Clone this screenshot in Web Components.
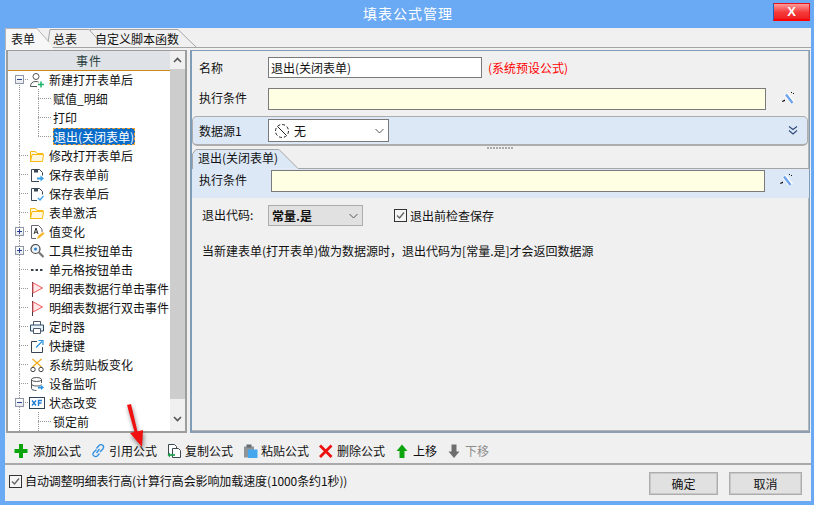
<!DOCTYPE html>
<html lang="zh">
<head>
<meta charset="utf-8">
<title>填表公式管理</title>
<style>
html,body{margin:0;padding:0;}
body{font:12px/1 "Noto Sans CJK SC","Liberation Sans",sans-serif;color:#111;}
</style>
</head>
<body>

<app-window>
  <title-bar slot="title">填表公式管理</title-bar>
  <tab-strip slot="tabs"></tab-strip>

  <tree-panel slot="tree">
    <tree-row icon="user-add" toggle="minus" first>新建打开表单后</tree-row>
    <tree-row child>赋值_明细</tree-row>
    <tree-row child>打印</tree-row>
    <tree-row child last selected>退出(关闭表单)</tree-row>
    <tree-row icon="folder">修改打开表单后</tree-row>
    <tree-row icon="save-in">保存表单前</tree-row>
    <tree-row icon="save-ok">保存表单后</tree-row>
    <tree-row icon="folder">表单激活</tree-row>
    <tree-row icon="doc-edit" toggle="plus">值变化</tree-row>
    <tree-row icon="search" toggle="plus">工具栏按钮单击</tree-row>
    <tree-row icon="dots">单元格按钮单击</tree-row>
    <tree-row icon="flag">明细表数据行单击事件</tree-row>
    <tree-row icon="flag">明细表数据行双击事件</tree-row>
    <tree-row icon="printer">定时器</tree-row>
    <tree-row icon="share">快捷键</tree-row>
    <tree-row icon="scissors">系统剪贴板变化</tree-row>
    <tree-row icon="database">设备监听</tree-row>
    <tree-row icon="xf" toggle="minus">状态改变</tree-row>
    <tree-row child>锁定前</tree-row>
  </tree-panel>

  <form-panel slot="form"></form-panel>

  <action-bar slot="actions">
    <action-item icon="plus">添加公式</action-item>
    <action-item icon="link">引用公式</action-item>
    <action-item icon="copy">复制公式</action-item>
    <action-item icon="paste">粘贴公式</action-item>
    <action-item icon="cross">删除公式</action-item>
    <action-item icon="up">上移</action-item>
    <action-item icon="down" disabled>下移</action-item>
  </action-bar>

  <check-box slot="option" style="letter-spacing:-.1px">自动调整明细表行高(计算行高会影响加载速度(1000条约1秒))</check-box>
  <push-button slot="ok" style="width:69px">确定</push-button>
  <push-button slot="cancel" style="width:73px">取消</push-button>
</app-window>

<script>
/* icons, all on a 16 box */
const ICONS = {
  'user-add': '<circle cx="7" cy="4.500" r="3" fill="#fff" stroke="#555"/><path d="M1.500 14.500c0-3.500 2-5 5.500-5 1 0 2 .2 2.700.6M1.500 14.500H8" fill="none" stroke="#555"/><path d="M12 9.500v6M9 12.500h6" stroke="#1cb36b" stroke-width="1.500"/>',
  'folder': '<path d="M1.500 13.500V3.500h5l1.500 2h6v1" fill="#fff8df" stroke="#f9b90f"/><path d="M1.500 13.500l1.500-7h11.500l-1 7z" fill="#fff8df" stroke="#f9b90f"/>',
  'save-in': '<path d="M2.500 14.500H10M2.500 14.500v-12h8l3 3v3" fill="none" stroke="#3b4654"/><path d="M5 2.500h4v3H5z" fill="#3b4654"/><path d="M8 11.500h4" stroke="#39a0e8" stroke-width="2"/><path d="M11.500 8.500l3.500 3-3.500 3z" fill="#39a0e8"/>',
  'save-ok': '<path d="M2.500 14.500H8M2.500 14.500v-12h8l3 3v3" fill="none" stroke="#3b4654"/><path d="M5 2.500h4v3H5z" fill="#3b4654"/><path d="M9 12l2 2 3.500-4" fill="none" stroke="#39a0e8" stroke-width="1.200"/>',
  'doc-edit': '<path d="M2.500 14.500v-13h7l3.500 3.500v3M2.500 14.500H7" fill="none" stroke="#667"/><path d="M5 10l2-6 2 6M5.800 8.200h2.500" fill="none" stroke="#333"/><path d="M8 15l1-3 5-4 1.500 1.500-5 4.500z" fill="#f7b52c"/>',
  'search': '<circle cx="6.500" cy="6" r="4.500" fill="#eef3f8" stroke="#444" stroke-width="1.200"/><circle cx="6.500" cy="6" r="1.500" fill="#2a7fd0"/><path d="M10 9.500l4.500 4.500" stroke="#777" stroke-width="2.200"/>',
  'dots': '<path d="M2 8h2.500M6.500 8H9M11 8h2.500" stroke="#39424e" stroke-width="2"/>',
  'flag': '<path d="M3.500 1v15" stroke="#4a3b46"/><path d="M4 1.800L13.500 7 4 12z" fill="#ffe8e8" stroke="#f2585a"/>',
  'printer': '<path d="M4.500 6V2.500h7V6" fill="none" stroke="#4f5a66"/><path d="M4 12H1.500V6h13v6H12" fill="#eaf2fa" stroke="#2a4a68"/><path d="M4.500 9.500h7v5h-7z" fill="#fff" stroke="#4f5a66"/>',
  'share': '<path d="M13.500 9v5.500h-11v-11H8" fill="none" stroke="#39424e"/><path d="M7 9.500l6-6M9.500 2.500h4.500V7" fill="none" stroke="#2a92e0" stroke-width="1.200"/>',
  'scissors': '<path d="M3.500 2l9 8M12.500 2l-9 8" stroke="#f0a818" stroke-width="1.200"/><circle cx="4" cy="12.500" r="2.200" fill="#fff" stroke="#444"/><circle cx="12" cy="12.500" r="2.200" fill="#fff" stroke="#444"/>',
  'database': '<ellipse cx="7.500" cy="3.500" rx="5" ry="2" fill="#fff" stroke="#555"/><path d="M2.500 3.500v9c0 1.200 2.200 2 5 2M2.500 8c0 1.200 2.200 2 5 2s3.500-.4 5-1.200M12.500 3.500V7" fill="none" stroke="#555"/><path d="M9 11.500h3" stroke="#2a92e0" stroke-width="2"/><path d="M12 9l3 2.500-3 2.500z" fill="#2a92e0"/>',
  'xf': '<rect x=".5" y="2.500" width="15" height="11" fill="#fff" stroke="#2f4358"/><path d="M3 5.500l4 5M7 5.500l-4 5" stroke="#1f7fd6" stroke-width="1.400"/><path d="M9.500 11V5.500h3.500M9.500 8H12.500" fill="none" stroke="#1f7fd6" stroke-width="1.400"/>',
  'plus': '<path d="M7 1v14M.5 8h13" stroke="#0da50d" stroke-width="4"/>',
  'link': '<path d="M6.500 6.500L4 9c-1.500 1.500-1.500 3 0 4s2.500.8 3.500-.2l2-2.300" fill="none" stroke="#2f8fe0" stroke-width="1.300"/><path d="M6.500 5.500l2.500-3c1.200-1.200 2.800-1.200 3.800-.2s1 2.500 0 3.700L10 9M6.500 10L9.500 6" fill="none" stroke="#2f8fe0" stroke-width="1.300"/>',
  'copy': '<path d="M2.500 11.500v-10h6l2 2v2" fill="#fff" stroke="#3d4a50"/><path d="M6.500 5.500h6l2 2v7h-8z" fill="#fff" stroke="#3d4a50"/><path d="M4 12h5" stroke="#159b45" stroke-width="1.600"/><path d="M4 9.500v5l-2.500-2.500z" fill="#159b45"/>',
  'paste': '<path d="M2 3.500h10v11H2z" fill="#8f9498"/><path d="M4.500 1.500h5v3h-5z" fill="#666b70"/><path d="M6 6.500h9.500v8.500H6z" fill="#45a8ee"/>',
  'cross': '<path d="M2 2.500l11.500 11.500M13.500 2.500L2 14" stroke="#ee0f0f" stroke-width="2.800"/>',
  'up': '<path d="M8 1.500l5.500 6.500H10.500v7h-5V8H2.500z" fill="#0da50d"/>',
  'down': '<path d="M5.500 1.500h5v7h3L8 15 2.500 8.500h3z" fill="#6e6e6e"/>',
  'none': '<circle cx="8" cy="8" r="6.500" fill="#fff" stroke="#222" stroke-dasharray="3 2"/><path d="M3.500 3.500l9 9" stroke="#222"/>',
  'wand': '<path d="M5 3l7 9" stroke="#fff" stroke-width="5" opacity=".8"/><path d="M5 3.500l6.500 8.500" stroke="#6fa5ea" stroke-width="2.400"/><path d="M1 10l3-1.500v1.500L1.500 11z" fill="#111"/><path d="M10 1h1v1h-1zM12 2h1v1h-1z" fill="#111"/>'
};

function iconSvg(name, size) {
  return `<svg width="${size||16}" height="${size||16}" viewBox="0 0 16 16" aria-hidden="true">${ICONS[name]||''}</svg>`;
}

// html can be a function of the element, for markup that reads attributes
function define(tag, css, html) {
  customElements.define(tag, class extends HTMLElement {
    constructor() {
      super();
      this.attachShadow({mode:'open'});
    }
    connectedCallback() {
      const body = typeof html=='function' ? html(this) : html;
      this.shadowRoot.innerHTML = `<style>${css}</style>${body}`;
    }
  });
}

define('app-window', `
:host{display:block;position:relative;width:814px;height:505px;background:#6aa9f4;overflow:hidden;}
.client{display:flex;flex-direction:column;height:473px;margin:0 3px 0 5px;background:#f0f0f0;}
.main{display:flex;height:383px;padding-left:1px;gap:3px;}
.foot{display:flex;align-items:center;flex:1;padding:0 9px 0 4px;border-top:2px solid #a9a9a9;}
.foot .opt{flex:1;margin-top:-4px;}
.foot .btns{display:flex;gap:11px;margin-top:1px;}
.arrow{position:absolute;left:122px;top:402px;filter:drop-shadow(1px 3px 2px rgba(0,0,0,.45));}
`, `
<slot name="title"></slot>
<div class="client">
  <slot name="tabs"></slot>
  <div class="main"><slot name="tree"></slot><slot name="form"></slot></div>
  <slot name="actions"></slot>
  <div class="foot">
    <div class="opt"><slot name="option"></slot></div>
    <div class="btns"><slot name="ok"></slot><slot name="cancel"></slot></div>
  </div>
</div>
<svg class="arrow" width="26" height="48" viewBox="0 0 26 48" aria-hidden="true">
  <path d="M5 3l4-1 6.500 27.500 5.500-1.500-1 17-12-14 4.500-1z" fill="#f01010"/>
</svg>
`);

define('title-bar', `
:host{display:flex;align-items:center;justify-content:center;height:28px;position:relative;color:#fff;font-size:14px;letter-spacing:1px;padding-left:2px;box-sizing:border-box;padding-bottom:2px;}
.x{position:absolute;left:773px;top:3px;width:37px;height:18px;box-sizing:border-box;display:flex;align-items:center;justify-content:center;
 background:linear-gradient(#ff9a9a,#f53a3a 55%,#ee2020);border:1px solid #e8141c;border-bottom:2px solid #f00;border-left-color:#2060c0;
 font:bold 13px "Liberation Sans",sans-serif;letter-spacing:0;color:#fff;}
`, `<slot></slot><span class="x">X</span>`);

define('tab-strip', `
:host{display:block;height:22px;position:relative;}
svg{position:absolute;left:0;top:0;}
.tabs{display:flex;gap:18px;padding-left:6px;height:22px;align-items:center;position:relative;}
`, `
<svg width="806" height="22" aria-hidden="true">
  <path d="M47 19.500H806" stroke="#a5a5a5" fill="none"/>
  <path d="M85 19V1.500H173L191 19z" fill="#f0f0f0"/>
  <path d="M85 14V1.500H173L191.500 19.500" stroke="#a5a5a5" fill="none"/>
  <path d="M44 19V1.500H84L99 19z" fill="#f0f0f0"/>
  <path d="M43 14L45 1.500H84L98 17" stroke="#a5a5a5" fill="none"/>
  <path d="M.5 22V.5H32L48 20V22z" fill="#f7f7f7"/>
  <path d="M.5 22V.5H32L44 14" stroke="#b5b5b5" fill="none"/>
</svg>
<div class="tabs"><span>表单</span><span>总表</span><span>自定义脚本函数</span></div>
`);

define('tree-panel', `
:host{display:flex;width:181px;height:383px;box-sizing:border-box;border:1px solid #9d9d9d;border-width:1px 2px 2px 2px;background:#fff;overflow:hidden;}
.list{width:162px;flex:none;}
.head{height:20px;box-sizing:border-box;display:flex;align-items:center;justify-content:center;background:#dfe3e8;border-bottom:1px solid #cf8a1f;color:#27403a;font-size:12px;letter-spacing:1px;}
.bar{width:15px;flex:none;display:flex;flex-direction:column;background:#f0f0f0;}
.btn{height:18px;display:flex;align-items:center;justify-content:center;}
.thumb{height:330px;background:#cdcdcd;}
.gap{flex:1;}
.rows{overflow:hidden;height:361px;margin-top:-1px;}
`, `
<div class="list">
  <div class="head">事件</div>
  <div class="rows"><slot></slot></div>
</div>
<div class="bar">
  <div class="btn"><svg width="9" height="6" viewBox="0 0 9 6"><path d="M1 5l3.500-3.500L8 5" fill="none" stroke="#555" stroke-width="1.600"/></svg></div>
  <div class="thumb"></div>
  <div class="gap"></div>
  <div class="btn" style="height:24px"><svg width="9" height="6" viewBox="0 0 9 6"><path d="M1 1l3.500 3.500L8 1" fill="none" stroke="#555" stroke-width="1.600"/></svg></div>
</div>
`);

const DOT_H = 'repeating-linear-gradient(90deg,#999 0 1px,transparent 1px 2px)';
const DOT_V = 'repeating-linear-gradient(#999 0 1px,transparent 1px 2px)';

define('tree-row', `
:host{display:flex;align-items:center;height:19px;white-space:nowrap;font-size:12px;}
.g1{width:21px;height:19px;flex:none;display:flex;align-items:center;box-sizing:border-box;padding-left:7px;}
.g2{width:23px;height:19px;flex:none;}
.toggle{width:9px;height:9px;box-sizing:border-box;border:1px solid #8e97a6;background:linear-gradient(#fff,#e6e9ee);display:flex;align-items:center;justify-content:center;}
.icon{display:flex;width:16px;margin-right:3px;flex:none;}
.text{padding:0 1px;line-height:17px;height:17px;}
.text.sel{margin-left:1px;background:#0a6cc9;color:#fff;outline:1px dashed #f0a030;outline-offset:-1px;}
`, el => {
  const child = el.hasAttribute('child');
  const toggle = el.getAttribute('toggle');
  // lines of the tree, drawn as backgrounds of the gutter cells
  const g1Bg = [];
  g1Bg.push(`${DOT_V} 11px ${el.hasAttribute('first') ? '9px' : '0'}/1px 19px no-repeat`);
  if(!child) g1Bg.push(`${DOT_H} 11px 9px/11px 1px no-repeat`);
  const g2Bg = [`${DOT_V} 9px 0/1px ${el.hasAttribute('last') ? '10px' : '19px'} no-repeat`, `${DOT_H} 9px 9px/13px 1px no-repeat`];
  let mark = '';
  if(toggle) {
    mark = `<span class="toggle"><svg width="7" height="7" viewBox="0 0 7 7"><path d="M1 3.500h5${toggle=='plus' ? 'M3.500 1v5' : ''}" stroke="#2a3f8f"/></svg></span>`;
  }
  return `
  <span class="g1" style="background:${g1Bg.join(',')}">${mark}</span>
  ${child ? `<span class="g2" style="background:${g2Bg.join(',')}"></span>` : `<span class="icon">${iconSvg(el.getAttribute('icon'))}</span>`}
  <span class="text${el.hasAttribute('selected') ? ' sel' : ''}"><slot></slot></span>`;
});

define('text-field', `
:host{display:block;box-sizing:border-box;height:21px;border:1px solid #7a7a7a;background:#fff;padding:0 2px;line-height:19px;white-space:nowrap;}
:host([note]){background:#ffffe3;}
`, `<slot></slot>`);

define('combo-box', `
:host{display:flex;align-items:center;box-sizing:border-box;height:23px;border:1px solid #7a7a7a;background:#fff;padding:0 4px 0 5px;white-space:nowrap;}
:host([flat]){height:21px;background:#e1e1e1;border-color:#acacac;font-weight:bold;padding-left:3px;}
.v{flex:1;}
svg{flex:none;}
`, `<span class="v"><slot></slot></span><svg width="9" height="6" viewBox="0 0 9 6"><path d="M.5 1l4 4 4-4" fill="none" stroke="#555"/></svg>`);

define('check-box', `
:host{display:inline-flex;align-items:center;gap:3px;white-space:nowrap;}
.b{width:13px;height:13px;box-sizing:border-box;border:1px solid #333;background:#f5f5f5;flex:none;display:flex;}
`, `<span class="b"><svg width="11" height="11" viewBox="0 0 11 11"><path d="M2 5.500l2.500 2.500L9 2.500" fill="none" stroke="#666" stroke-width="1.400"/></svg></span><span><slot></slot></span>`);

define('push-button', `
:host{display:flex;align-items:center;justify-content:center;box-sizing:border-box;height:23px;background:#e1e1e1;border:1px solid #adadad;outline:1px solid #c8c8c8;outline-offset:-2px;}
`, `<slot></slot>`);

define('action-item', `
:host{display:flex;align-items:center;gap:3px;white-space:nowrap;}
:host([disabled]){color:#8d8d8d;}
.i{display:flex;width:16px;height:16px;flex:none;}
`, el => `<span class="i">${iconSvg(el.getAttribute('icon'))}</span><slot></slot>`);

define('action-bar', `
:host{display:flex;align-items:center;gap:9px;height:30px;box-sizing:border-box;padding:6px 0 0 9px;}
`, `<slot></slot>`);

define('form-panel', `
:host{display:flex;flex-direction:column;width:620px;height:383px;box-sizing:border-box;border:1px solid #7f9db9;border-left-width:2px;border-bottom:2px solid #8e9eb0;box-shadow:inset -1px -1px 0 #b5b5b5;}
.row{display:flex;align-items:center;padding-left:7px;}
.lab{width:69px;flex:none;}
.up1{margin-bottom:2px;}
.wand{display:flex;flex:none;}
.red{color:#f00;margin-left:6px;}
.band{display:flex;align-items:center;height:30px;box-sizing:border-box;margin:6px 1px 0 0;background:#dde8f7;border:1px solid #adadad;border-width:1px 1px 2px 1px;border-radius:5px;padding:0 9px 0 6px;}
.split{height:3px;display:flex;justify-content:center;}
.split i{display:block;width:27px;height:2px;margin-top:1px;background:repeating-linear-gradient(90deg,#aaa 0 2px,transparent 2px 3px);}
.subtab{display:flex;height:20px;position:relative;}
.subtab svg{position:absolute;left:0;top:0;}
.subtab span{position:relative;padding:3px 0 0 6px;}
.sub{display:flex;align-items:center;height:29px;background:#dde8f7;padding:0 0 0 7px;}
.sub .lab{width:72px;margin-top:-7px;}
.sp{flex:1;}
.note{padding:19px 0 0 10px;}
`, `
<div class="row" style="margin-top:6px">
  <span class="lab">名称</span>
  <text-field style="width:214px">退出(关闭表单)</text-field>
  <span class="red">(系统预设公式)</span>
</div>
<div class="row" style="margin-top:10px">
  <span class="lab up1">执行条件</span>
  <text-field note style="width:498px;height:22px"></text-field>
  <span class="wand" style="margin-left:15px">${iconSvg('wand')}</span>
</div>
<div class="band">
  <span class="lab">数据源1</span>
  <combo-box style="width:121px"><span style="display:flex;align-items:center;gap:4px">${iconSvg('none')}无</span></combo-box>
  <span class="sp"></span>
  <svg width="10" height="9" viewBox="0 0 10 9" aria-hidden="true"><path d="M1 .5l4 3 4-3M1 4.500l4 3.500 4-3.500" fill="none" stroke="#2e4a78" stroke-width="1.100"/></svg>
</div>
<div class="split"><i></i></div>
<div class="subtab">
  <svg width="618" height="20" aria-hidden="true">
    <path d="M0 20V5L4 .5H87L106 19.500H618V20z" fill="#dde8f7"/>
    <path d="M106 19.500H618V21H0z" fill="#f0f0f0"/>
    <path d="M.5 20V5L4 .5H87L106 19.500H618" fill="none" stroke="#a5a5a5"/>
  </svg>
  <span>退出(关闭表单)</span>
</div>
<div class="sub">
  <span class="lab">执行条件</span>
  <text-field note style="width:494px;height:22px;margin-top:-5px"></text-field>
  <span class="wand" style="margin:-5px 0 0 14px">${iconSvg('wand')}</span>
</div>
<div class="row" style="margin-top:7px;padding-left:10px">
  <span class="up1" style="width:66px">退出代码:</span>
  <combo-box flat style="width:95px">常量.是</combo-box>
  <check-box style="margin-left:31px">退出前检查保存</check-box>
</div>
<div class="note">当新建表单(打开表单)做为数据源时，退出代码为[常量.是]才会返回数据源</div>
`);
</script>
</body>
</html>
